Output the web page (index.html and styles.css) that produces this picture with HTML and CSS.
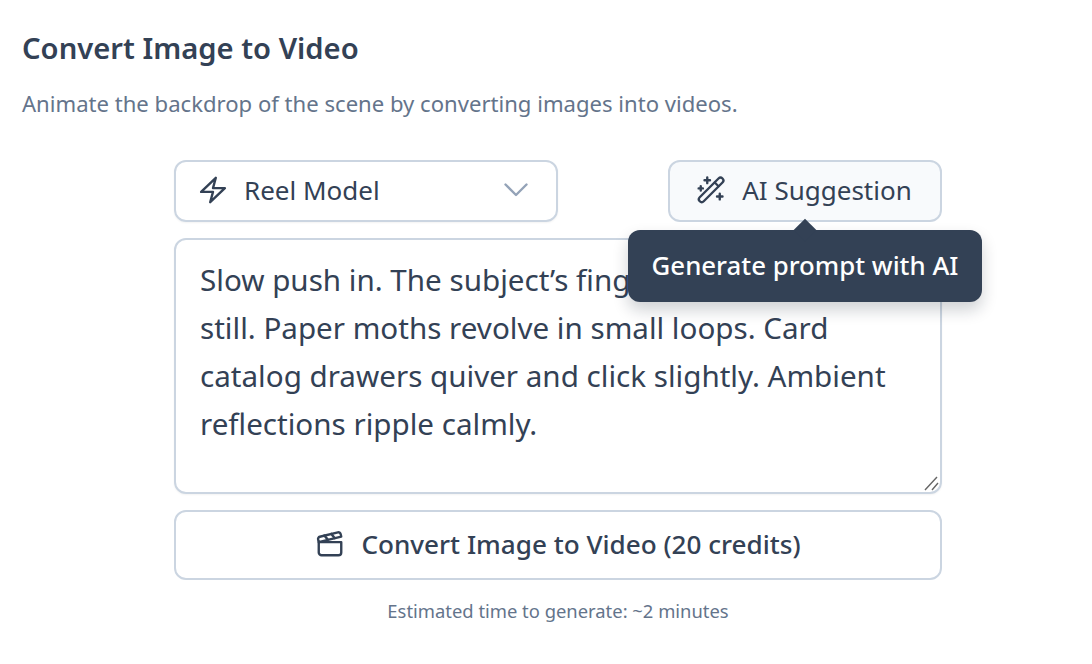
FILE: index.html
```html
<!DOCTYPE html>
<html lang="en">

<head>
    <meta charset="UTF-8">
    <title>Convert Image to Video</title>
    <link rel="stylesheet" href="styles.css">
</head>

<body>
    <div class="page">
        <h1 class="title">Convert Image to Video</h1>
        <p class="subtitle">Animate the backdrop of the scene by converting images into videos.</p>

        <div class="panel">
            <div class="controls">
                <div class="modelSelect">
                    <svg class="icon" viewBox="0 0 24 24" fill="none" stroke="currentColor" stroke-width="1.9" stroke-linecap="round" stroke-linejoin="round">
                        <path d="M2.500 13.500 14.250 2.250 12 10.500h9.500L9.750 21.750 12 13.500H2.500z" />
                    </svg>
                    <span class="modelName">Reel Model</span>
                    <svg class="chevron" viewBox="0 0 24 24" fill="none" stroke="currentColor" stroke-width="2.400" stroke-linecap="round" stroke-linejoin="round">
                        <path d="M1.500 6.500 12 17 22.500 6.500" />
                    </svg>
                </div>

                <div class="suggestWrap">
                    <button class="suggestBtn">
                        <svg class="icon" viewBox="0 0 24 24" fill="none" stroke="currentColor" stroke-width="1.9" stroke-linecap="round" stroke-linejoin="round">
                            <path d="M18 2.800a2.200 2.200 0 0 1 3.200 3.200L6.200 21a2.200 2.200 0 0 1-3.200-3.200L18 2.800z" />
                            <path d="m15 6 3 3" />
                            <path d="M9 2v4.500M6.800 4.200h4.400M3.800 9v3.400M2.100 10.700h3.400M19 15v4.500M16.800 17.200h4.400" />
                        </svg>
                        <span>AI Suggestion</span>
                    </button>
                    <div class="tooltip">Generate prompt with AI</div>
                </div>
            </div>

            <div class="promptWrap">
                <textarea class="prompt">Slow push in. The subject’s fingers stay perfectly still. Paper moths revolve in small loops. Card catalog drawers quiver and click slightly. Ambient reflections ripple calmly.</textarea>
                <svg class="resizer" viewBox="0 0 16 16" fill="none" stroke="#666666" stroke-width="1.400">
                    <path d="M1 14 13 1M8 14l6-7" />
                </svg>
            </div>

            <button class="convertBtn">
                <svg class="icon" viewBox="0 0 24 24" fill="none" stroke="currentColor" stroke-width="1.9" stroke-linecap="round" stroke-linejoin="round">
                    <path d="M3 10.500h18v8.250a2.250 2.250 0 0 1-2.250 2.250H5.250A2.250 2.250 0 0 1 3 18.750V10.500z" />
                    <path d="M3 10.500 2.500 8.400a1.800 1.800 0 0 1 1.300-2.200l14.500-3.500a1.800 1.800 0 0 1 2.200 1.300l.5 2.100L3 10.500z" />
                    <path d="m7.500 5.200 2.700 3.300M13 3.900l2.700 3.300" />
                </svg>
                <span>Convert Image to Video (20 credits)</span>
            </button>

            <p class="estimate">Estimated time to generate: ~2 minutes</p>
        </div>
    </div>
</body>

</html>
```

FILE: styles.css
```css
* {
    box-sizing: border-box;
}

body {
    margin: 0;
    background: #ffffff;
    color: #334155;
    font-family: "Noto Sans", "Liberation Sans", sans-serif;
}

.page {
    padding: 30px 22px 0;
}

.title {
    margin: 0;
    height: 36px;
    font-size: 29.2px;
    line-height: 36px;
    font-weight: 600;
}

.subtitle {
    margin: 21px 0 0;
    height: 32px;
    font-size: 22.100px;
    line-height: 32px;
    color: #64748b;
}

.panel {
    width: 768px;
    margin: 41px 0 0 152px;
    display: flex;
    flex-direction: column;
}

.controls {
    display: flex;
    justify-content: space-between;
}

.icon {
    width: 30px;
    height: 30px;
    flex-shrink: 0;
}

.modelSelect {
    width: 384px;
    height: 62px;
    padding: 0 28px 2px 22px;
    display: flex;
    align-items: center;
    gap: 16px;
    border: 2px solid #cbd5e1;
    border-radius: 12px;
    box-shadow: 0 1px 2px rgba(0, 0, 0, 0.05);
    font-size: 26px;
}

.modelName {
    flex: 1;
}

.chevron {
    width: 24px;
    height: 24px;
    color: #94a3b8;
}

.suggestWrap {
    position: relative;
}

.suggestBtn {
    width: 274px;
    height: 62px;
    padding: 0 2px 2px 0;
    display: flex;
    align-items: center;
    justify-content: center;
    gap: 16px;
    border: 2px solid #cbd5e1;
    border-radius: 12px;
    background: #f8fafc;
    color: #334155;
    font-family: inherit;
    font-size: 26px;
}

.tooltip {
    position: absolute;
    z-index: 1;
    top: 70px;
    left: -40px;
    width: 354px;
    height: 72px;
    border-radius: 12px;
    background: #334155;
    color: #ffffff;
    font-size: 25.800px;
    font-weight: 500;
    line-height: 70px;
    text-align: center;
    box-shadow: 0 8px 16px rgba(15, 23, 42, 0.2);
}

.tooltip::before {
    content: "";
    position: absolute;
    top: -8px;
    left: 169px;
    width: 16px;
    height: 16px;
    background: #334155;
    transform: rotate(45deg);
}

.promptWrap {
    position: relative;
    height: 256px;
    margin-top: 16px;
}

.prompt {
    display: block;
    width: 768px;
    height: 256px;
    padding: 16px 24px;
    border: 2px solid #cbd5e1;
    border-radius: 12px;
    outline: none;
    resize: none;
    box-shadow: 0 1px 2px rgba(0, 0, 0, 0.05);
    color: #334155;
    font-family: inherit;
    font-size: 29.600px;
    line-height: 48px;
}

.resizer {
    position: absolute;
    right: 2px;
    bottom: 2px;
    width: 16px;
    height: 16px;
}

.convertBtn {
    width: 768px;
    height: 70px;
    margin-top: 16px;
    padding: 0 0 2px;
    display: flex;
    align-items: center;
    justify-content: center;
    gap: 16px;
    border: 2px solid #cbd5e1;
    border-radius: 12px;
    background: #ffffff;
    color: #334155;
    font-family: inherit;
    font-size: 26.100px;
    font-weight: 500;
}

.estimate {
    margin: 19px 0 0;
    text-align: center;
    font-size: 18.400px;
    line-height: 24px;
    color: #64748b;
}
```
